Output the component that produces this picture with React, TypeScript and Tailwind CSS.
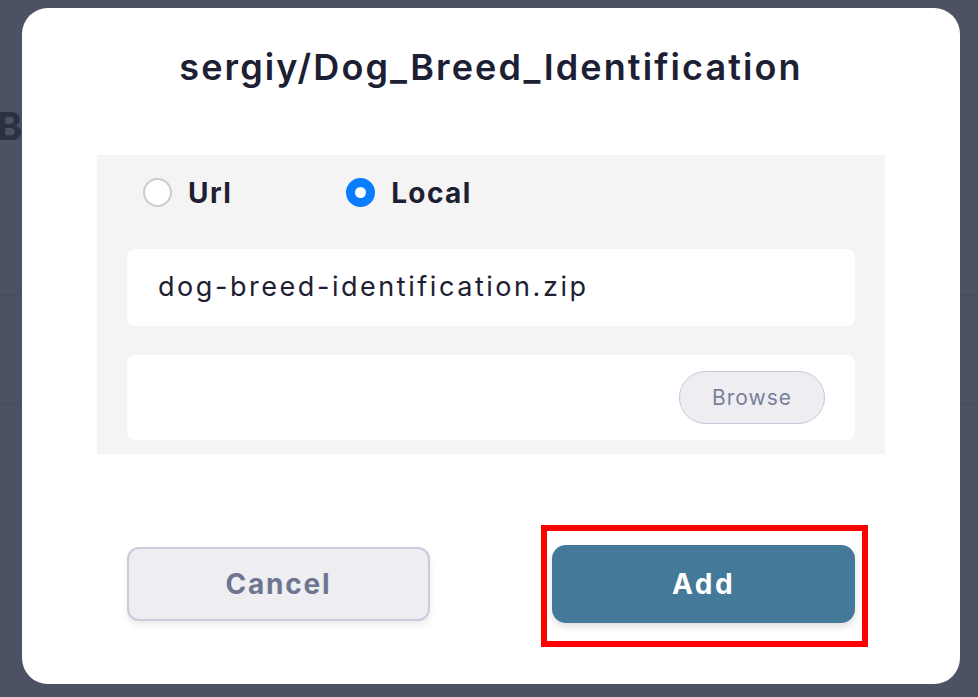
import { useState } from "react";

type Source = "url" | "local";

function Radio({ checked, label, onClick }: { checked: boolean; label: string; onClick: () => void }) {
  return (
    <button type="button" onClick={onClick} className="flex items-center gap-[16px]">
      {checked ? (
        <span className="w-[29px] h-[29px] rounded-full bg-[#0a7dff] flex items-center justify-center">
          <span className="w-[11px] h-[11px] rounded-full bg-white" />
        </span>
      ) : (
        <span className="w-[29px] h-[29px] rounded-full bg-white border-2 border-[#c9ccd2]" />
      )}
      <span className="text-[28px] font-bold text-[#1d2033] leading-none tracking-[1.4px]">{label}</span>
    </button>
  );
}

export default function App() {
  const [source, setSource] = useState<Source>("local");

  return (
    <div
      className="relative w-[978px] h-[697px] overflow-hidden bg-[#4c5163]"
      style={{ fontFamily: "Inter, 'Open Sans', sans-serif" }}
    >
      {/* page behind the dialog */}
      <div className="pt-[98px]">
        <div className="text-[38px] font-bold text-[#2b3042] -ml-[3px] tracking-[1px]">Breed Identification</div>
        <div className="mt-[140px] border-t border-[#474b5c]" />
        <div className="mt-[107px] border-t border-[#474b5c]" />
      </div>

      {/* dialog */}
      <div className="absolute left-[22px] top-[8px] w-[938px] h-[676px] rounded-[26px] bg-white">
        <h2 className="pt-[34px] text-center text-[36px] font-semibold text-[#1d2033] leading-[50px] tracking-[2.1px]">
          sergiy/Dog_Breed_Identification
        </h2>

        <div className="mx-[75px] mt-[63px] h-[299px] bg-[#f4f4f4] px-[30px] pt-[22px]">
          <div className="flex items-center gap-[114px] pl-[16px] h-[31px]">
            <Radio checked={source === "url"} label="Url" onClick={() => setSource("url")} />
            <Radio checked={source === "local"} label="Local" onClick={() => setSource("local")} />
          </div>

          <div className="mt-[41px] h-[77px] rounded-[8px] bg-white flex items-center pl-[31px] text-[27px] text-[#1d2033] tracking-[2.55px]">
            dog-breed-identification.zip
          </div>

          <div className="mt-[29px] h-[85px] rounded-[8px] bg-white flex items-center justify-end pr-[30px]">
            <button
              type="button"
              className="w-[146px] h-[53px] rounded-full bg-[#eeeef2] border border-[#c5c9da] text-[21px] text-[#7a7f99] tracking-[1px]"
            >
              Browse
            </button>
          </div>
        </div>

        <div className="mt-[91px] mx-[105px] flex items-center justify-between">
          <button
            type="button"
            className="w-[303px] h-[74px] rounded-[12px] bg-[#eeeef2] border-2 border-[#c8cbdc] text-[28px] font-bold text-[#6e7590] tracking-[1.8px] shadow-[0_4px_6px_rgba(0,0,0,0.08)]"
          >
            Cancel
          </button>
          <button
            type="button"
            className="w-[303px] h-[78px] rounded-[14px] bg-[#44799a] text-[28px] font-bold text-white tracking-[2.5px] shadow-[0_4px_6px_rgba(0,0,0,0.12)]"
          >
            Add
          </button>
        </div>
      </div>

      {/* highlight annotation */}
      <div className="absolute left-[541px] top-[525px] w-[327px] h-[122px] border-[6px] border-[#ff0000]" />
    </div>
  );
}
